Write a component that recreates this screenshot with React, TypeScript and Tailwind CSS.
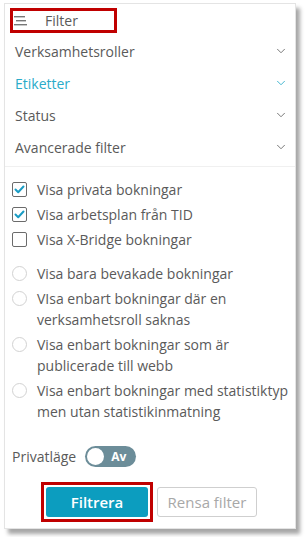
import { ChevronDown } from "lucide-react";

const sections = [
  { label: "Verksamhetsroller", active: false },
  { label: "Etiketter", active: true },
  { label: "Status", active: false },
  { label: "Avancerade filter", active: false },
];

const checks = [
  { label: "Visa privata bokningar", checked: true },
  { label: "Visa arbetsplan från TID", checked: true },
  { label: "Visa X-Bridge bokningar", checked: false },
];

const radios = [
  "Visa bara bevakade bokningar",
  "VIsa enbart bokningar där en verksamhetsroll saknas",
  "Visa enbart bokningar som är publicerade till webb",
  "Visa enbart bokningar med statistiktyp men utan statistikinmatning",
];

function Checkbox({ checked }: { checked: boolean }) {
  return (
    <span className="flex h-[15px] w-[15px] shrink-0 items-center justify-center rounded-[2px] border border-[#6b6b6b] bg-white">
      {checked && (
        <svg width="11" height="9" viewBox="0 0 11 9" fill="none">
          <path d="M1.5 4.5 L4.2 7.2 L9.5 1.5" stroke="#1a9cc4" strokeWidth="2" strokeLinecap="round" strokeLinejoin="round" />
        </svg>
      )}
    </span>
  );
}

export default function App() {
  return (
    <div className="h-[537px] w-[306px] bg-white pl-[4px] pt-[3px]" style={{ fontFamily: '"Open Sans", sans-serif' }}>
      <div className="flex h-[526px] w-[292px] flex-col border border-[#e4e4e4] bg-white text-[14px] text-[#5a5a5a] shadow-[4px_5px_4px_rgba(0,0,0,0.35)]">
        <div className="ml-[5px] mt-[4px] flex h-[25px] w-[107px] shrink-0 items-center border-[3px] border-[#c00000] pl-[1px]">
          <svg width="14" height="12" viewBox="0 0 14 12" className="shrink-0">
            <rect x="0" y="1" width="11" height="1.4" fill="#777" />
            <rect x="2" y="5" width="10" height="1.4" fill="#777" />
            <rect x="0" y="9" width="13" height="1.4" fill="#777" />
          </svg>
          <span className="ml-[17px] leading-none">Filter</span>
        </div>

        <div className="mt-[2px] flex shrink-0 flex-col">
          {sections.map((s) => (
            <div key={s.label} className="flex h-[32px] items-center justify-between pl-[10px] pr-[7px]">
              <span className={s.active ? "text-[#2aabc9]" : ""}>{s.label}</span>
              <ChevronDown size={14} strokeWidth={1.5} className={s.active ? "text-[#2aabc9]" : "text-[#666]"} />
            </div>
          ))}
        </div>

        <div className="mt-[3px] h-px shrink-0 bg-[#f0f0f0]" />

        <div className="mt-[10px] flex shrink-0 flex-col pl-[7px]">
          {checks.map((c) => (
            <div key={c.label} className="flex h-[25px] items-center gap-[10px]">
              <Checkbox checked={c.checked} />
              <span>{c.label}</span>
            </div>
          ))}
        </div>

        <div className="mt-[11px] flex shrink-0 flex-col gap-[4px] pl-[7px] pr-[4px]">
          {radios.map((r) => (
            <div key={r} className="flex items-start gap-[10px] leading-[21px]">
              <span className="mt-[3px] h-[15px] w-[15px] shrink-0 rounded-full border border-[#d2d2d2] bg-white" />
              <span>{r}</span>
            </div>
          ))}
        </div>

        <div className="mt-[24px] flex shrink-0 items-center gap-[9px] pl-[7px]">
          <span>Privatläge</span>
          <span className="flex h-[21px] w-[51px] items-center rounded-full bg-[#6c8d99] pl-[2px]">
            <span className="h-[17px] w-[17px] rounded-full bg-white" />
            <span className="ml-[7px] text-[12px] font-bold text-white">Av</span>
          </span>
        </div>

        <div className="mt-[15px] flex shrink-0 items-center pl-[36px]">
          <div className="border-[3px] border-[#c00000] p-[2px]">
            <button className="h-[30px] w-[102px] rounded-[3px] bg-[#0c9dbf] text-[15px] font-semibold text-white">
              Filtrera
            </button>
          </div>
          <button className="ml-[4px] h-[30px] w-[100px] rounded-[3px] border border-[#cfcfcf] bg-white text-[15px] text-[#a8a8a8]">
            Rensa filter
          </button>
        </div>
      </div>
    </div>
  );
}
